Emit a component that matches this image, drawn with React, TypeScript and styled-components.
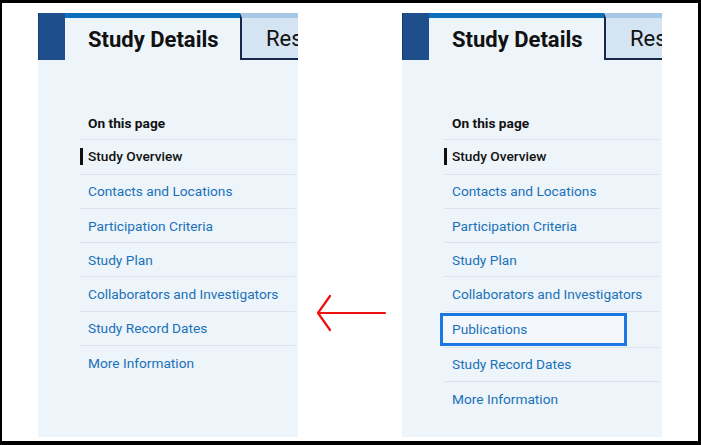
import React from 'react';
import styled, { createGlobalStyle } from 'styled-components';

const GlobalStyle = createGlobalStyle`
  html, body {
    margin: 0;
    padding: 0;
    background: #ffffff;
    font-family: Roboto, "Liberation Sans", Arial, sans-serif;
  }
`;

const Frame = styled.div`
  box-sizing: border-box;
  width: 701px;
  height: 445px;
  border: 3px solid #000;
  border-left-width: 2px;
  border-bottom-width: 4px;
  background: #fff;
  display: flex;
  align-items: flex-start;
  padding: 10px 0 0 36px;
`;

const Panel = styled.div`
  width: 260px;
  height: 424px;
  background: #edf4fa;
  display: flex;
  flex-direction: column;
  overflow: hidden;
  flex-shrink: 0;
`;

const TabBar = styled.div`
  display: flex;
  height: 47px;
  flex-shrink: 0;
`;

const TabStub = styled.div`
  width: 27px;
  background: #1f4e8d;
  box-shadow: inset 1px 0 0 #163d72;
`;

const Tab = styled.div<{ $active?: boolean }>`
  box-sizing: border-box;
  display: flex;
  align-items: center;
  white-space: nowrap;
  overflow: hidden;
  font-size: 22px;
  color: #111;
  ${(p) =>
    p.$active
      ? `
    width: 175px;
    padding-left: 23px;
    font-weight: 700;
    background: #edf4fa;
    border-top: 5px solid #0a6fbd;
  `
      : `
    flex: 1;
    padding-left: 24px;
    font-weight: 400;
    background: #d5e4f3;
    border-top: 5px solid #a8c8e8;
    border-left: 2px solid #17284a;
    border-bottom: 2px solid #17284a;
  `}
`;

const Nav = styled.nav`
  display: flex;
  flex-direction: column;
  padding: 46px 3px 0 42px;
`;

const Row = styled.div<{ $last?: boolean; $tall?: boolean }>`
  box-sizing: border-box;
  height: ${(p) => (p.$tall ? '36px' : '34.3px')};
  display: flex;
  align-items: center;
  padding-left: 8px;
  border-bottom: ${(p) => (p.$last ? 'none' : '1px solid #dbe2ea')};
  font-size: 13.7px;
`;

const Heading = styled.span`
  font-weight: 700;
  color: #111;
`;

const Current = styled.span`
  margin-left: -8px;
  padding-left: 5px;
  border-left: 3px solid #111;
  line-height: 17px;
  font-weight: 500;
  color: #111;
`;

const Link = styled.a<{ $focused?: boolean }>`
  color: #1a71b8;
  text-decoration: none;
  font-weight: 400;
  ${(p) =>
    p.$focused &&
    `
    box-sizing: border-box;
    display: flex;
    align-items: center;
    align-self: stretch;
    width: 187px;
    margin: 1px 0 1px -12px;
    padding-left: 9px;
    border: 3px solid #1b78e2;
    background: #f4f8fc;
  `}
`;

const Gap = styled.div`
  width: 104px;
  height: 424px;
  flex-shrink: 0;
  display: flex;
  align-items: flex-start;
  justify-content: center;
  padding-top: 281px;
  box-sizing: border-box;
`;

const ArrowSvg = styled.svg`
  display: block;
  margin-left: 2px;
`;

type Item = { label: string; focused?: boolean };

const Sidebar: React.FC<{ items: Item[] }> = ({ items }) => (
  <Panel>
    <TabBar>
      <TabStub />
      <Tab $active>Study Details</Tab>
      <Tab>Results Overview</Tab>
    </TabBar>
    <Nav>
      <Row>
        <Heading>On this page</Heading>
      </Row>
      <Row>
        <Current>Study Overview</Current>
      </Row>
      {items.map((it, i) => (
        <Row key={it.label} $last={i === items.length - 1} $tall={it.focused}>
          <Link href="#" $focused={it.focused}>
            {it.label}
          </Link>
        </Row>
      ))}
    </Nav>
  </Panel>
);

const before: Item[] = [
  { label: 'Contacts and Locations' },
  { label: 'Participation Criteria' },
  { label: 'Study Plan' },
  { label: 'Collaborators and Investigators' },
  { label: 'Study Record Dates' },
  { label: 'More Information' },
];

const after: Item[] = [
  { label: 'Contacts and Locations' },
  { label: 'Participation Criteria' },
  { label: 'Study Plan' },
  { label: 'Collaborators and Investigators' },
  { label: 'Publications', focused: true },
  { label: 'Study Record Dates' },
  { label: 'More Information' },
];

const App: React.FC = () => (
  <>
    <GlobalStyle />
    <Frame>
      <Sidebar items={before} />
      <Gap>
        <ArrowSvg width="72" height="40" viewBox="0 0 72 40">
          <path
            d="M70 19H4M15 2L3 19L15 36"
            fill="none"
            stroke="#ee1111"
            strokeWidth="2.2"
            strokeLinecap="round"
            strokeLinejoin="round"
          />
        </ArrowSvg>
      </Gap>
      <Sidebar items={after} />
    </Frame>
  </>
);

export default App;
